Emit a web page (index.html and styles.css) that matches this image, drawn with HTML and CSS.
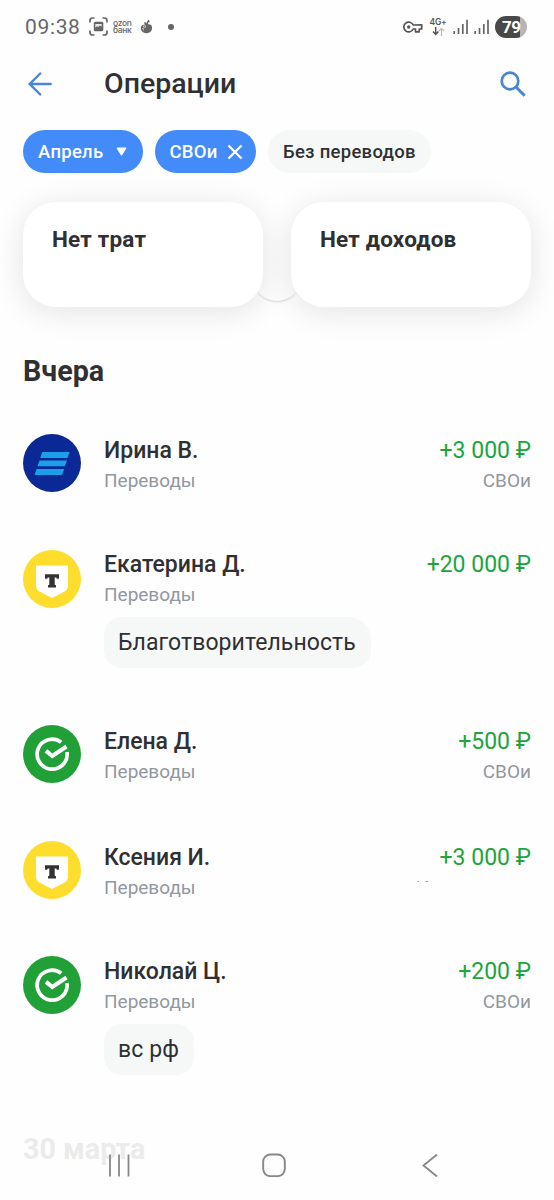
FILE: index.html
```
<!DOCTYPE html>
<html lang="ru">
<head>
<meta charset="utf-8">
<title>Операции</title>
<link rel="stylesheet" href="styles.css">
</head>
<body>
<svg class="defs" width="0" height="0">
  <symbol id="signal" viewBox="0 0 16 16"><path d="M1.2 12v3M5.500 9v6M9.800 5v10M14 .8V15" fill="none" stroke="#666" stroke-width="1.700"/></symbol>
  <symbol id="logo-t" viewBox="0 0 58 58">
    <circle cx="29" cy="29" r="29" fill="#fedd2c"/>
    <path d="M13 15.500h32v20q0 4-3.500 6L29 48 16.500 41.500Q13 39.500 13 35.500z" fill="#fff"/>
    <path d="M22 24.300h14v4.500h-2.200l-.5-1.200h-1.600v7.200l1.300.4V37.500h-8v-2.300l1.300-.4v-7.200h-1.600l-.5 1.200H22z" fill="#333"/>
  </symbol>
  <symbol id="logo-check" viewBox="0 0 58 58">
    <circle cx="29" cy="29" r="29" fill="#21a038"/>
    <path d="M38.200 17.200A15 15 0 1 0 44 27" fill="none" stroke="#fff" stroke-width="3.700"/>
    <path d="M23 25.800l6.300 5.200L43.500 21.500" fill="none" stroke="#fff" stroke-width="4.200"/>
  </symbol>
</svg>
<div class="screen">
  <header class="status">
    <span class="clock">09:38</span>
    <svg class="shot" width="19" height="19" viewBox="0 0 19 19"><path d="M1 5.500V3.500Q1 1 3.500 1h2M13.500 1h2Q18 1 18 3.500v2M18 13.500v2Q18 18 15.500 18h-2M5.500 18h-2Q1 18 1 15.500v-2" fill="none" stroke="#666" stroke-width="1.700"/><rect x="4.800" y="4.800" width="9.500" height="9.500" rx="1.500" fill="#666"/><path d="M6.300 10.500V7h6.300v2.500l-1.800-1-1.600 1.600-1.200-.8z" fill="#eee"/></svg>
    <span class="ozon"><span>ozon</span><span>банк</span></span>
    <svg class="fruit" width="13" height="15" viewBox="0 0 13 15"><path d="M5 5.500Q3.500 4 4.500 3q1.500.2 2 1.500Q7.200 1.500 8.500.8L9.800 2Q8.200 3.200 7.800 5.200q4-.5 4.300 3.300-.1 5.700-5.800 5.700Q.8 13.600.8 9 .9 5.800 5 5.500z" fill="#666"/><path d="M3.500 6.700h2v1.600h-2zM2 9.500h1.500v2" stroke="#ddd" stroke-width=".7" fill="none"/></svg>
    <span class="dot"></span>
    <span class="spacer"></span>
    <svg class="key" width="20" height="12" viewBox="0 0 20 12"><path d="M10.200 4A4.900 4.900 0 1 0 10.200 8h2.300v2.800h3.700V8h2.500V3.900z" fill="none" stroke="#555" stroke-width="1.700" stroke-linejoin="round"/><circle cx="5.700" cy="6" r="1.700" fill="#555"/></svg>
    <span class="net"><span>4G+</span><svg width="13" height="9" viewBox="0 0 13 9"><path d="M3.700 0v7M1 4.500l2.700 3 2.700-3" fill="none" stroke="#555" stroke-width="1.500"/><path d="M9.500 9V1.500M7 4l2.500-2.700L12 4" fill="none" stroke="#bbb" stroke-width="1.200"/></svg></span>
    <svg class="sig1" width="16" height="16"><use href="#signal"/></svg>
    <svg class="sig2" width="16" height="16"><use href="#signal"/></svg>
    <span class="battery">79</span>
  </header>

  <div class="toolbar">
    <svg width="24" height="24" viewBox="0 0 24 24"><path d="M22.600 12H1.700M12.200 1.500L1.700 12l10.500 10.500" fill="none" stroke="#4586dc" stroke-width="2.400" stroke-linecap="round"/></svg>
    <h1 class="title">Операции</h1>
    <svg width="26" height="26" viewBox="0 0 26 26"><circle cx="10" cy="10" r="8.300" fill="none" stroke="#4586d6" stroke-width="2.700"/><path d="M16 16l8.700 8.700" stroke="#4586d6" stroke-width="3"/></svg>
  </div>

  <div class="chips">
    <span class="chip chip-month"><span>Апрель</span><svg width="11" height="9" viewBox="0 0 11 9"><path d="M1.700.5h7.600q1.500 0 .8 1.200L6.400 7.800q-.9 1.200-1.800 0L.9 1.700Q.2.5 1.700.5z" fill="#fff"/></svg></span>
    <span class="chip chip-tag"><span>СВОи</span><svg width="16" height="16" viewBox="0 0 16 16"><path d="M1.500 1.500l13 13M14.500 1.500l-13 13" stroke="#fff" stroke-width="2.300"/></svg></span>
    <span class="chip chip-plain"><span>Без переводов</span></span>
  </div>

  <div class="cards">
    <div class="card"><span>Нет трат</span></div>
    <div class="card"><span>Нет доходов</span></div>
    <span class="knob"></span>
  </div>

  <h2 class="day"><span>Вчера</span></h2>

  <div class="list">
    <div class="row">
      <svg class="avatar" viewBox="0 0 58 58"><circle cx="29" cy="29" r="29" fill="#0a2896"/><path d="M19.300 18H46.700l-2.200 6H17.200zM16.500 26.500H44l-2.200 5.800H14.400zM13.600 35H41.200l-2.200 6H11.500z" fill="#1ba0e8"/></svg>
      <div class="body"><span class="name">Ирина В.</span><span class="kind">Переводы</span></div>
      <div class="side"><span class="sum">+3 000 ₽</span><span class="kind">СВОи</span></div>
    </div>
    <div class="row tagged">
      <svg class="avatar"><use href="#logo-t"/></svg>
      <div class="body"><span class="name">Екатерина Д.</span><span class="kind">Переводы</span><span class="note note-long">Благотворительность</span></div>
      <div class="side"><span class="sum">+20 000 ₽</span></div>
    </div>
    <div class="row">
      <svg class="avatar"><use href="#logo-check"/></svg>
      <div class="body"><span class="name">Елена Д.</span><span class="kind">Переводы</span></div>
      <div class="side"><span class="sum">+500 ₽</span><span class="kind">СВОи</span></div>
    </div>
    <div class="row">
      <svg class="avatar"><use href="#logo-t"/></svg>
      <div class="body"><span class="name">Ксения И.</span><span class="kind">Переводы</span></div>
      <div class="side"><span class="sum">+3 000 ₽</span><svg class="specks" width="12" height="3" viewBox="0 0 12 3"><path d="M.5 1.500h1.500M8.500 1.500h2.500" stroke="#999" stroke-width="1.200"/></svg></div>
    </div>
    <div class="row tagged last">
      <svg class="avatar"><use href="#logo-check"/></svg>
      <div class="body"><span class="name">Николай Ц.</span><span class="kind">Переводы</span><span class="note note-short">вс рф</span></div>
      <div class="side"><span class="sum">+200 ₽</span><span class="kind">СВОи</span></div>
    </div>
  </div>

  <h2 class="day day-next"><span>30 марта</span></h2>

  <nav class="nav">
    <svg width="22" height="24" viewBox="0 0 22 24"><path d="M2 1.500v22M11 1.500v22M20.500 1.500v22" stroke="#888" stroke-width="1.800"/></svg>
    <svg width="24" height="24" viewBox="0 0 24 24"><rect x="1.200" y="1.500" width="21.600" height="21.600" rx="7" fill="none" stroke="#888" stroke-width="1.900"/></svg>
    <svg width="16" height="24" viewBox="0 0 16 24"><path d="M15 1.500L1.500 12.500 15 23.500" fill="none" stroke="#888" stroke-width="1.900"/></svg>
  </nav>
</div>
</body>
</html>
```
FILE: styles.css
```
* { box-sizing: border-box; }
body { margin: 0; background: #fefefe; font-family: Roboto, sans-serif; color: #303033; }
svg { display: block; flex: none; }
.defs { position: absolute; }
.screen { position: relative; width: 554px; height: 1200px; overflow: hidden; display: flex; flex-direction: column; }
span { white-space: nowrap; }

.status { display: flex; align-items: center; height: 53px; padding: 0 28px 0 25px; color: #666; flex: none; }
.clock { width: 56px; font-size: 21px; letter-spacing: .65px; }
.shot { margin-left: 8px; }
.ozon { display: flex; flex-direction: column; width: 21px; margin-left: 5px; font: 500 8.500px/7px Inter, sans-serif; letter-spacing: -.3px; }
.ozon span { height: 7px; }
.fruit { margin-left: 6px; }
.dot { width: 6px; height: 6px; margin-left: 15px; border-radius: 50%; background: #666; }
.spacer { flex: 1; }
.key { margin-right: 6px; }
.net { display: flex; flex-direction: column; align-items: center; gap: 1px; width: 18px; font: 600 8.500px/8px Inter, sans-serif; letter-spacing: -.2px; color: #555; }
.sig1 { margin-left: 6px; }
.sig2 { margin: 0 5px; }
.battery { width: 32px; height: 22px; margin-right: -1px; border-radius: 11px; padding-left: 7px; background: linear-gradient(90deg, #484848 78%, #b5b5b5 78%); color: #fff; font: 700 17px/22px Roboto, sans-serif; letter-spacing: -.5px; }

.toolbar { display: flex; align-items: center; height: 62px; padding: 0 28px; flex: none; }
.title { flex: 1; margin: 0 0 0 52px; font-size: 28.500px; font-weight: 500; line-height: 34px; }

.chips { display: flex; gap: 12px; margin-top: 15px; padding-left: 23px; flex: none; }
.chip { display: flex; align-items: center; height: 43px; padding: 0 15px; border-radius: 22px; background: #428bf9; color: #fff; font-size: 18.500px; font-weight: 500; letter-spacing: .28px; }
.chip-month { width: 119.500px; justify-content: space-between; padding-right: 16px; }
.chip-tag { width: 101.500px; justify-content: space-between; padding-right: 13px; }
.chip-plain { width: 163px; background: #f6f8f8; color: #303033; }

.cards { position: relative; display: flex; gap: 28px; height: 105px; margin: 29px 23px 0; flex: none; }
.card { position: relative; z-index: 1; flex: 1; padding: 22px 29px; border-radius: 33px; background: #fff; box-shadow: 0 5px 32px rgba(0, 0, 0, .11); font-size: 22.500px; font-weight: 700; line-height: 30px; letter-spacing: .2px; }
.knob { position: absolute; left: 229px; bottom: 6px; width: 50px; height: 50px; border-radius: 25px; box-shadow: 0 2px 2px -1px rgba(0, 0, 0, .16); }

.day { margin: 47px 0 0 23px; font-size: 28.700px; font-weight: 700; line-height: 34px; flex: none; }
.list { display: flex; flex-direction: column; margin-top: 46px; padding: 0 23px; flex: none; }
.row { display: flex; height: 115.500px; }
.row.tagged { height: 175.500px; }
.avatar { width: 58px; height: 58px; }
.body { display: flex; flex-direction: column; align-items: flex-start; flex: 1; margin: 1px 0 0 23px; }
.side { display: flex; flex-direction: column; align-items: flex-end; margin-top: 1px; }
.name, .sum { font-size: 23px; line-height: 31px; }
.name { font-weight: 500; }
.sum { color: #1da53c; }
.kind { font-size: 19px; line-height: 29px; color: #9297a0; }
.tagged .body, .tagged .side { margin-top: -.5px; }
.note { height: 51px; margin-top: 8px; padding-left: 14px; border-radius: 18px; background: #f6f8f8; font-size: 23px; line-height: 51px; letter-spacing: .08px; }
.note-long { width: 267px; border-top-right-radius: 22px; }
.note-short { width: 90px; }
.specks { margin: 7px 102px 0 0; }
.day-next { margin-top: 0; color: #ebebeb; }

.nav { position: absolute; left: 108px; top: 1153px; display: flex; align-items: center; }
.nav svg:nth-child(2) { margin-left: 132px; }
.nav svg:nth-child(3) { margin-left: 136px; }
```
